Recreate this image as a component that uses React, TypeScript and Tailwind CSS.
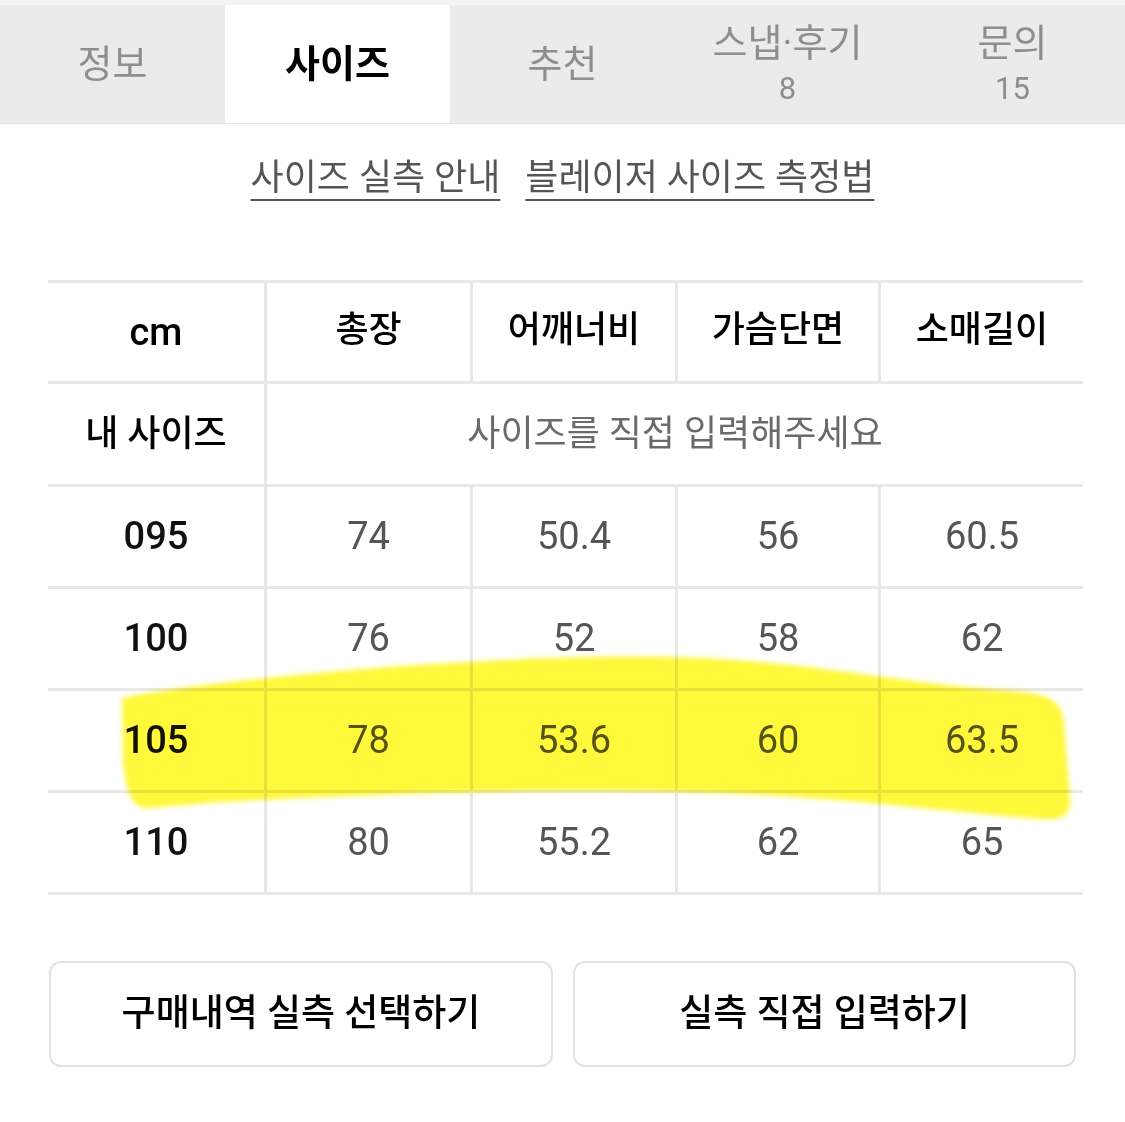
const font = { fontFamily: 'Roboto, "Noto Sans CJK KR", sans-serif' };

const tabs = [
  { label: '정보' },
  { label: '사이즈', active: true },
  { label: '추천' },
  { label: '스냅·후기', count: '8' },
  { label: '문의', count: '15' },
];

const headers = ['총장', '어깨너비', '가슴단면', '소매길이'];

const rows = [
  { size: '095', values: ['74', '50.4', '56', '60.5'] },
  { size: '100', values: ['76', '52', '58', '62'] },
  { size: '105', values: ['78', '53.6', '60', '63.5'] },
  { size: '110', values: ['80', '55.2', '62', '65'] },
];

const cols = 'grid grid-cols-[216px_206px_205px_203px_205px]';

function Highlight() {
  return (
    <svg
      className="absolute left-0 top-0 pointer-events-none mix-blend-multiply"
      width="1125"
      height="1122"
      viewBox="0 0 1125 1122"
    >
      <defs>
        <filter id="soft" x="-5%" y="-20%" width="110%" height="140%">
          <feGaussianBlur stdDeviation="2.5" />
        </filter>
      </defs>
      <path
        filter="url(#soft)"
        fill="#fff83a"
        d="M 122 698 C 200 682, 380 666, 470 662 C 560 656, 680 654, 760 662 C 850 670, 900 682, 1000 690 C 1045 693, 1062 698, 1064 722 L 1070 800 C 1071 816, 1060 821, 1040 819 C 960 813, 880 802, 780 796 C 680 790, 560 790, 470 792 C 380 795, 250 798, 150 808 C 132 810, 126 792, 123 762 Z"
      />
    </svg>
  );
}

function App() {
  return (
    <div className="relative w-[1125px] h-[1122px] bg-white overflow-hidden" style={font}>
      <div className="h-[5px] bg-[#f4f4f4]" />
      <div className="grid grid-cols-5 h-[119px] bg-[#ebebeb] border-b border-[#e4e4e4]">
        {tabs.map((t) => (
          <div
            key={t.label}
            className={`flex flex-col items-center justify-center ${t.active ? 'bg-white text-black font-bold' : 'text-[#8e8e8e]'}`}
          >
            <span className="text-[38px] leading-[44px]">{t.label}</span>
            {t.count && <span className="text-[31px] leading-[36px] mt-[6px]">{t.count}</span>}
          </div>
        ))}
      </div>

      <div className="mt-[34px] flex justify-center gap-[25px] text-[36px] leading-[40px] text-[#555555]">
        <span className="underline decoration-2 underline-offset-[9px]">사이즈 실측 안내</span>
        <span className="underline decoration-2 underline-offset-[9px]">블레이저 사이즈 측정법</span>
      </div>

      <div className="mt-[82px] ml-[48px] w-[1035px] border-t-[3px] border-[#e8e8e8]">
        <div className={`${cols} h-[101px] border-b-[3px] border-[#e8e8e8] text-[36px] font-medium text-black`}>
          <div className="flex items-center justify-center text-[38px]">cm</div>
          {headers.map((h) => (
            <div key={h} className="flex items-center justify-center border-l-[3px] border-[#e8e8e8] pb-[4px]">
              {h}
            </div>
          ))}
        </div>
        <div className="grid grid-cols-[216px_819px] h-[103px] border-b-[3px] border-[#e8e8e8]">
          <div className="flex items-center justify-center text-[36px] font-medium text-black">내 사이즈</div>
          <div className="flex items-center justify-center border-l-[3px] border-[#e8e8e8] text-[36px] text-[#6a6a6a]">
            사이즈를 직접 입력해주세요
          </div>
        </div>
        {rows.map((r) => (
          <div key={r.size} className={`${cols} h-[102px] border-b-[3px] border-[#e8e8e8]`}>
            <div className="flex items-center justify-center text-[38px] font-medium text-[#111111]">{r.size}</div>
            {r.values.map((v, i) => (
              <div
                key={i}
                className="flex items-center justify-center border-l-[3px] border-[#e8e8e8] text-[38px] text-[#555555]"
              >
                {v}
              </div>
            ))}
          </div>
        ))}
      </div>

      <div className="mt-[66px] ml-[49px] flex gap-[20px]">
        <button className="w-[504px] h-[106px] rounded-[12px] border-2 border-[#e2e2e2] bg-white text-[37px] font-medium text-black">
          구매내역 실측 선택하기
        </button>
        <button className="w-[503px] h-[106px] rounded-[12px] border-2 border-[#e2e2e2] bg-white text-[37px] font-medium text-black">
          실측 직접 입력하기
        </button>
      </div>

      <Highlight />
    </div>
  );
}

export default App;
